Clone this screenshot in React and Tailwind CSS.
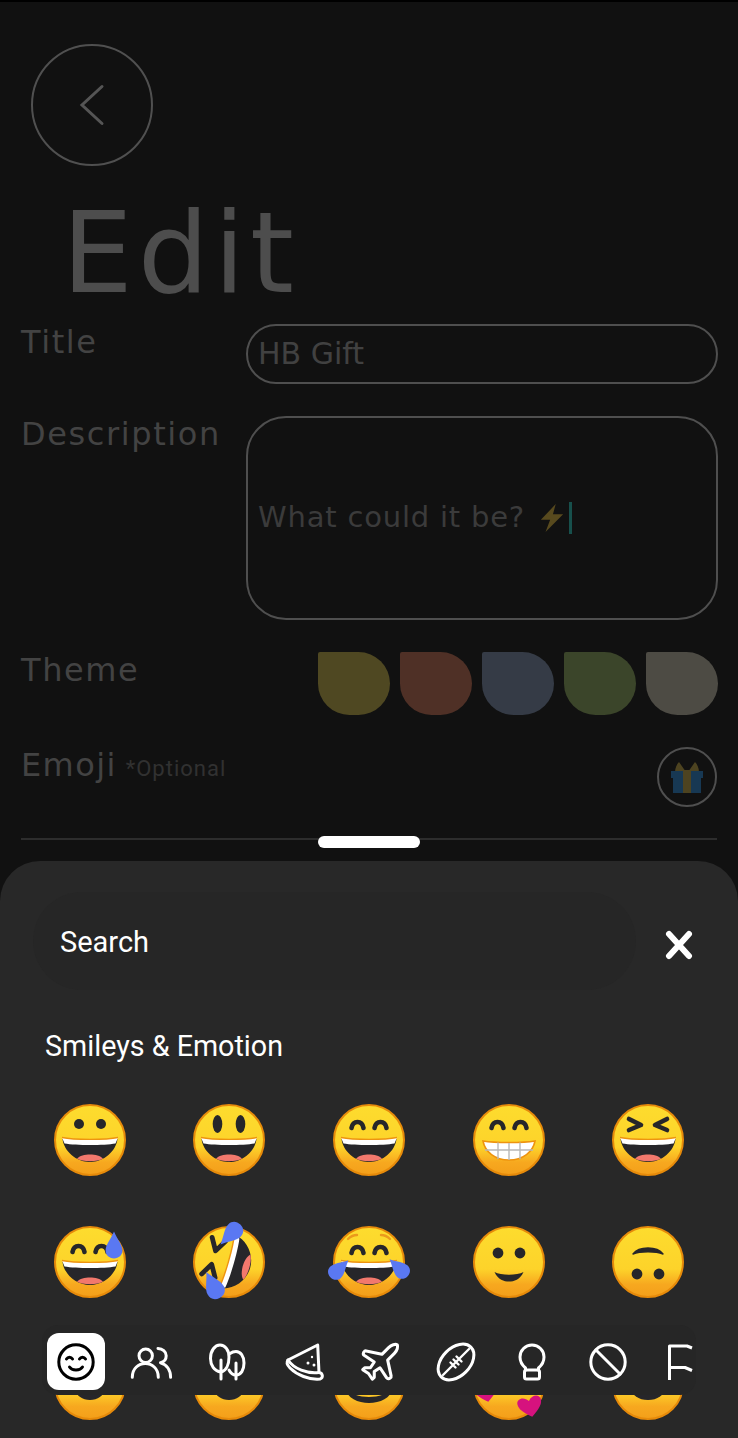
import { Plane } from "lucide-react";

const GRID = Array.from({ length: 15 }, (_, i) => i);

function Mouth() {
  return (
    <g>
      <path d="M8.5 35C20 37 52 37 63.5 35C62 47 50 58 36 58C22 58 10 47 8.5 35Z" fill="#26262a" />
      <path d="M23 54.5C28 49 44 49 49 54.5C44 58 28 58 23 54.5Z" fill="#f2786d" />
      <path d="M8 33.5C20 36 52 36 64 33.5L61.5 39.5C50 41.5 22 41.5 10.5 39.5Z" fill="#fff" />
      <path d="M8 33.5C20 36 52 36 64 33.5" fill="none" stroke="#ee930f" strokeWidth="1.4" />
    </g>
  );
}

function ArcEyes({ y = 21 }) {
  return (
    <g fill="none" stroke="#26262a" strokeWidth="4.6" strokeLinecap="round">
      <path d={`M18.5 ${y + 3}C20 ${y - 5} 29 ${y - 5} 30.5 ${y + 3}`} />
      <path d={`M41.5 ${y + 3}C43 ${y - 5} 52 ${y - 5} 53.5 ${y + 3}`} />
    </g>
  );
}

function Drop({ x, y, angle = 0, scale = 1 }) {
  return (
    <path
      transform={`translate(${x} ${y}) rotate(${angle}) scale(${scale})`}
      d="M0 -13C3 -6 7 -2 7 3C7 7 4 9.5 0 9.5C-4 9.5 -7 7 -7 3C-7 -2 -3 -6 0 -13Z"
      fill="#5a78f2"
    />
  );
}

function Heart({ x, y, angle = 0 }) {
  return (
    <path
      transform={`translate(${x} ${y}) rotate(${angle})`}
      d="M0 11C-8 5 -12 1 -12 -4C-12 -10 -4 -11 0 -5C4 -11 12 -10 12 -4C12 1 8 5 0 11Z"
      fill="#d6127e"
    />
  );
}

function Features({ kind }) {
  switch (kind) {
    case 0:
      return (
        <g>
          <circle cx="25" cy="20" r="5" fill="#26262a" />
          <circle cx="47" cy="20" r="5" fill="#26262a" />
          <Mouth />
        </g>
      );
    case 1:
      return (
        <g>
          <ellipse cx="24.5" cy="20" rx="4.8" ry="9" fill="#26262a" />
          <ellipse cx="47.5" cy="20" rx="4.8" ry="9" fill="#26262a" />
          <Mouth />
        </g>
      );
    case 2:
      return (
        <g>
          <ArcEyes />
          <Mouth />
        </g>
      );
    case 3:
      return (
        <g>
          <ArcEyes />
          <path d="M10 37C22 39 50 39 62 37C60 48 50 56 36 56C22 56 12 48 10 37Z" fill="#fff" stroke="#ee930f" strokeWidth="1.6" />
          <path d="M12 46H60M25 38.5V55M36 39V56M47 38.5V55" fill="none" stroke="#b8b8b8" strokeWidth="1.4" />
        </g>
      );
    case 4:
      return (
        <g>
          <path d="M17 15L29 21L17 26M55 15L43 21L55 26" fill="none" stroke="#26262a" strokeWidth="4.6" strokeLinecap="round" strokeLinejoin="round" />
          <Mouth />
        </g>
      );
    case 5:
      return (
        <g>
          <ArcEyes y={23} />
          <g transform="translate(0 1)">
            <Mouth />
          </g>
        </g>
      );
    case 6:
      return (
        <g transform="rotate(-74 36 36)">
          <path d="M17 13L29 20L17 27M55 13L43 20L55 27" fill="none" stroke="#26262a" strokeWidth="4.8" strokeLinecap="round" strokeLinejoin="round" />
          <Mouth />
        </g>
      );
    case 7:
      return (
        <g>
          <path d="M15 13C18 10 21 9 24 9M57 13C54 10 51 9 48 9" fill="none" stroke="#eb9a1c" strokeWidth="2.4" strokeLinecap="round" />
          <ArcEyes y={24} />
          <g transform="translate(0 1)">
            <Mouth />
          </g>
        </g>
      );
    case 8:
      return (
        <g>
          <circle cx="25" cy="27" r="5.4" fill="#26262a" />
          <circle cx="47" cy="27" r="5.4" fill="#26262a" />
          <path d="M21.5 46C28 49.5 44 49.5 50.5 46C47 54 41 55.5 36 55.5C31 55.5 25 54 21.5 46Z" fill="#26262a" />
        </g>
      );
    case 9:
      return (
        <g>
          <circle cx="25" cy="48" r="5.4" fill="#26262a" />
          <circle cx="47" cy="48" r="5.4" fill="#26262a" />
          <path d="M21 28C27 20 45 20 51 28C44 25 28 25 21 28Z" fill="#26262a" stroke="#26262a" strokeWidth="1.4" strokeLinejoin="round" />
        </g>
      );
    case 10:
    case 11:
      return <ellipse cx="36" cy="42" rx="14" ry="10" fill="#26262a" />;
    case 12:
      return <path d="M12 40C22 52 50 52 60 40C56 60 16 60 12 40Z" fill="#26262a" />;
    case 13:
      return <path d="M20 40C26 47 46 47 52 40C46 49 26 49 20 40Z" fill="#26262a" />;
    default:
      return <ellipse cx="36" cy="40" rx="17" ry="12" fill="#26262a" />;
  }
}

// blue drops and hearts hang over the edge of the face, so they come last
function Extras({ kind }) {
  if (kind === 5) return <Drop x={60} y={21} scale={1.2} />;
  if (kind === 6)
    return (
      <g>
        <Drop x={39} y={7} angle={-135} scale={1.25} />
        <Drop x={21} y={61} angle={-27} scale={1.3} />
      </g>
    );
  if (kind === 7)
    return (
      <g>
        <Drop x={5} y={44} angle={47} scale={1.1} />
        <Drop x={67} y={43} angle={-47} scale={1.1} />
      </g>
    );
  if (kind === 13)
    return (
      <g>
        <Heart x={57} y={58} angle={-12} />
        <Heart x={13} y={43} angle={-12} />
      </g>
    );
  return null;
}

function Face({ kind }) {
  const id = `face-${kind}`;
  return (
    <svg width="72" height="72" viewBox="0 0 72 72" className="overflow-visible">
      <defs>
        <linearGradient id={id} x1="0" y1="0" x2="0" y2="1">
          <stop offset="0" stopColor="#fddc2e" />
          <stop offset="0.6" stopColor="#fdd32a" />
          <stop offset="0.82" stopColor="#f7a81f" />
          <stop offset="1" stopColor="#f39f1a" />
        </linearGradient>
      </defs>
      <circle cx="36" cy="36" r="35" fill={`url(#${id})`} stroke="#e68a0a" strokeWidth="2" />
      <Features kind={kind} />
      <Extras kind={kind} />
    </svg>
  );
}

function Icon({ children, className = "text-white" }) {
  return (
    <svg
      width="38"
      height="38"
      viewBox="0 0 38 38"
      fill="none"
      stroke="currentColor"
      strokeWidth="3"
      strokeLinecap="round"
      strokeLinejoin="round"
      className={className + " shrink-0 overflow-visible"}
    >
      {children}
    </svg>
  );
}

const NAV = [
  <Icon key="smile" className="text-black">
    <circle cx="19" cy="19" r="17.2" />
    <path d="M9.5 16C11 13.5 14 13.5 15.5 16M22.5 16C24 13.5 27 13.5 28.5 16M12.5 24C15 28 23 28 25.5 24" />
  </Icon>,
  <Icon key="people">
    <circle cx="12.7" cy="12.7" r="6.7" />
    <path d="M-0.7 34.3C-0.7 16 25.3 16 25.3 34.3M25 5.4C29.5 5.6 33.2 8.5 33.2 12.7C33.2 16.5 30.5 19 27.5 19.7C33.5 21.5 37.6 27 37.6 34.3" />
  </Icon>,
  <Icon key="trees">
    <path d="M12 36V17M27 36V20" />
    <path d="M12 29C5 28 1.5 22 1.5 15.5C1.5 7.5 6 2 11 2C16 2 20 7 20 14C20 22 17 28 12 29Z" />
    <path d="M21 10.5C23 9 25 8.5 27 8.5C31.5 8.5 35 13 35 20C35 27 32 32 27 32C24 32 21.5 30 20 27" />
  </Icon>,
  <Icon key="pizza">
    <path d="M32.7 2L3 17C1.5 19 2 22 5 25C12 32 24 37 35 36C38.5 35 38 30 34 29.5L32.7 2Z" />
    <path d="M3 17C9 26 22 31 34 29.5" />
    <circle cx="27" cy="14" r="1.2" fill="currentColor" stroke="none" />
    <circle cx="23" cy="20" r="1.5" fill="currentColor" stroke="none" />
    <circle cx="29" cy="22" r="1.5" fill="currentColor" stroke="none" />
  </Icon>,
  <Plane key="plane" size={46} strokeWidth={1.6} className="shrink-0 text-white" />,
  <Icon key="football">
    <ellipse cx="19" cy="19" rx="21" ry="14" transform="rotate(-45 19 19)" />
    <path d="M6 32L32 6M13.5 19.5L18.5 24.5M16.5 16.5L21.5 21.5M19.5 13.5L24.5 18.5" strokeWidth="2.4" />
  </Icon>,
  <Icon key="bulb">
    <path d="M12.5 27V25C9 22 7 18.5 7 14A12 12 0 0 1 31 14C31 18.5 29 22 25.5 25V27" />
    <rect x="11.5" y="27" width="15" height="9" rx="2" />
  </Icon>,
  <Icon key="ban">
    <circle cx="19" cy="19" r="17.2" />
    <path d="M7 7L31 31" />
  </Icon>,
  <Icon key="flag">
    <path d="M4.5 37V3H22L27 5M4.5 24.5H20L27 27.5" strokeLinecap="butt" />
  </Icon>,
];

function Swatch({ className }) {
  return <div className={"h-[63px] w-[72px] rounded-[2px_32px_32px_32px] " + className} />;
}

export default function App() {
  return (
    <div className="relative flex h-[1438px] w-[738px] flex-col overflow-hidden border-t-2 border-black bg-[#111111] font-['DejaVu_Sans',sans-serif]">
      <div className="ml-[31px] mt-[42px] flex h-[122px] w-[122px] items-center justify-center rounded-full border-2 border-[#505050]">
        <svg width="32" height="44" viewBox="0 0 32 44" fill="none" stroke="#555555" strokeWidth="3" strokeLinecap="round" className="-ml-[1px]">
          <path d="M26 3.5L6 22L26 40.5" />
        </svg>
      </div>

      <h1 className="ml-[62px] mt-[31px] text-[112px] font-normal leading-[112px] tracking-[5px] text-[#4d4d4d]">Edit</h1>

      <div className="mt-[15px] grid grid-cols-[225px_472px] gap-y-[32px] px-[21px]">
        <div className="text-[32px] leading-[36px] tracking-[1.6px] text-[#434343]">Title</div>
        <div className="flex h-[60px] items-center rounded-full border-2 border-[#4f4f4f] pb-[2px] pl-[10px] text-[30px] text-[#414141]">
          HB Gift
        </div>

        <div className="text-[32px] leading-[36px] tracking-[1.6px] text-[#434343]">Description</div>
        <div className="flex h-[204px] items-center rounded-[40px] border-2 border-[#4f4f4f] pl-[10px] text-[29px] tracking-[0.8px] text-[#3b3b3b]">
          <span>What could it be?</span>
          <svg width="26" height="30" viewBox="0 0 28 30" className="ml-[14px]">
            <path d="M18 0L2 17H12L7 30L26 11H15Z" fill="#584a1e" />
          </svg>
          <span className="ml-[4px] h-[32px] w-[3px] bg-[#17504c]" />
        </div>

        <div className="text-[32px] leading-[36px] tracking-[1.6px] text-[#434343]">Theme</div>
        <div className="flex justify-end gap-[10px]">
          <Swatch className="bg-[#4f4822]" />
          <Swatch className="bg-[#4f3026]" />
          <Swatch className="bg-[#353b46]" />
          <Swatch className="bg-[#3b452a]" />
          <Swatch className="bg-[#4d4b44]" />
        </div>

        <div className="flex items-baseline gap-[9px] whitespace-nowrap text-[32px] leading-[36px] tracking-[1.4px] text-[#434343]">
          Emoji
          <span className="font-['Roboto',sans-serif] text-[22px] tracking-[1px] text-[#313131]">*Optional</span>
        </div>
        <div className="flex justify-end pr-[1px]">
          <div className="flex h-[60px] w-[60px] items-center justify-center rounded-full border-2 border-[#4f4f4f]">
            <svg width="32" height="32" viewBox="0 0 32 32" className="-ml-[1px]">
              <path d="M15 11L8 1C6 3 4 7 4 11ZM17 11L24 1C26 3 28 7 28 11Z" fill="#4d4320" />
              <path d="M0 10H32V17H30V32H2V17H0Z" fill="#173853" />
              <rect x="12" y="9" width="8" height="23" fill="#4d4320" />
            </svg>
          </div>
        </div>
      </div>

      <div className="relative mx-[21px] mt-[31px] h-[2px] bg-[#2d2d2d]">
        <div className="absolute -top-[2px] left-[297px] h-[12px] w-[102px] rounded-full bg-white" />
      </div>

      <div className="relative mt-[21px] flex-1 overflow-hidden rounded-t-[40px] bg-[#282828] font-['Roboto',sans-serif] text-white">
        <div className="ml-[33px] mt-[31px] flex items-center">
          <div className="flex h-[98px] w-[603px] items-center rounded-full bg-[#262626] pl-[27px] pt-[4px] text-[29px]">Search</div>
          <svg width="30" height="30" viewBox="0 0 30 30" fill="none" stroke="#ffffff" strokeWidth="6" strokeLinecap="round" className="ml-[28px] mt-[7px]">
            <path d="M5 4L25 26M25 4L5 26" />
          </svg>
        </div>

        <div className="ml-[45px] mt-[38px] text-[28.7px] leading-[36px]">Smileys &amp; Emotion</div>

        <div className="ml-[20px] mt-[40px] grid w-[698px] grid-cols-5 gap-y-[50px]">
          {GRID.map((k) => (
            <div key={k} className="flex justify-center">
              <Face kind={k} />
            </div>
          ))}
        </div>

        <div className="absolute left-[42px] top-[464px] flex h-[70px] w-[654px] items-start gap-[18px] rounded-[16px] bg-[#262626] pl-[5px] pt-[8px]">
          {NAV.map((icon, i) => (
            <div
              key={i}
              className={"flex h-[57px] w-[58px] shrink-0 items-center justify-center rounded-[12px] " + (i === 0 ? "bg-white" : "")}
            >
              {icon}
            </div>
          ))}
        </div>
      </div>
    </div>
  );
}
